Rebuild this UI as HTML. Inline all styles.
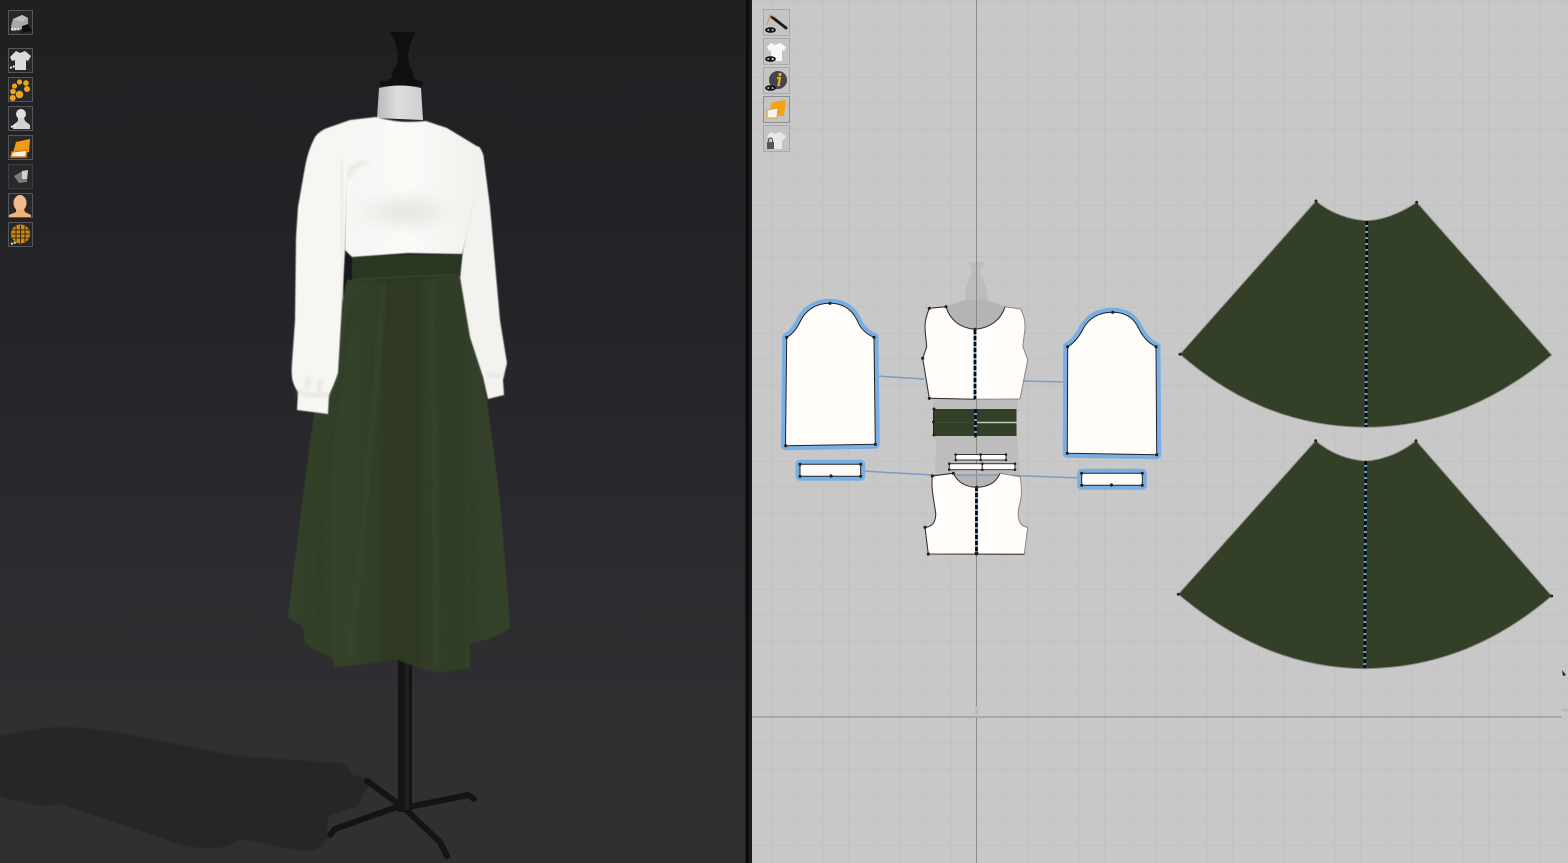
<!DOCTYPE html>
<html><head><meta charset="utf-8"><title>Garment 3D and 2D pattern view</title>
<style>html,body{margin:0;padding:0;background:#222;overflow:hidden}svg{display:block}</style></head>
<body>
<svg xmlns="http://www.w3.org/2000/svg" width="1568" height="863" viewBox="0 0 1568 863">
<defs>
<linearGradient id="bg" x1="0" y1="0" x2="0" y2="1">
<stop offset="0" stop-color="#1f2022"/><stop offset=".3" stop-color="#222326"/><stop offset=".6" stop-color="#2a2a2e"/><stop offset=".85" stop-color="#303033"/><stop offset="1" stop-color="#303032"/></linearGradient>
<pattern id="grid" x="976.5" y="717" width="25.6" height="25.6" patternUnits="userSpaceOnUse">
<path d="M0 0V25.6M0 0H25.6" stroke="#bcbcbc" stroke-width="1" fill="none"/></pattern>
<linearGradient id="neck" x1="0" x2="1"><stop offset="0" stop-color="#b9babd"/><stop offset=".45" stop-color="#dddddf"/><stop offset="1" stop-color="#cfcfd1"/></linearGradient>
<linearGradient id="blouse" x1="0" x2="1"><stop offset="0" stop-color="#f6f5f2"/><stop offset=".5" stop-color="#fafaf8"/><stop offset="1" stop-color="#f1f0ed"/></linearGradient>
<linearGradient id="skirt" gradientUnits="userSpaceOnUse" x1="288" y1="0" x2="512" y2="0">
<stop offset="0" stop-color="#35432b"/><stop offset=".12" stop-color="#323f28"/><stop offset=".25" stop-color="#35432b"/><stop offset=".38" stop-color="#323e28"/><stop offset=".47" stop-color="#2d3723"/><stop offset=".57" stop-color="#2e3924"/><stop offset=".65" stop-color="#323f28"/><stop offset=".72" stop-color="#303c27"/><stop offset=".85" stop-color="#34412a"/><stop offset="1" stop-color="#35432c"/></linearGradient>
<radialGradient id="bust" cx=".5" cy=".5" r=".5"><stop offset="0" stop-color="#d6d6d3" stop-opacity=".7"/><stop offset="1" stop-color="#dededb" stop-opacity="0"/></radialGradient>
<filter id="s1"><feGaussianBlur stdDeviation=".5"/></filter>
<filter id="s0"><feGaussianBlur stdDeviation=".35"/></filter>
<filter id="s2"><feGaussianBlur stdDeviation="2"/></filter>
<filter id="s3"><feGaussianBlur stdDeviation="5"/></filter>
<clipPath id="skclip"><path d="M347 280 460 276 475 340 487 400 500 500 508 600 510 627Q500 638 470 643L470 668Q450 672 437 672 415 668 398 660 365 664 335 667L332 657Q315 652 305 643L303 627 288 617 300 520 313 420 325 360 340 310Z"/></clipPath>
</defs>

<!-- left viewport -->
<rect width="745" height="863" fill="url(#bg)"/>
<!-- floor shadow -->
<path filter="url(#s1)" fill="#262628" d="M0 736Q30 728 64 727 100 728 135 736L236 756 340 763Q350 766 352 775L372 779 358 806 328 816 327 838Q322 852 300 851L240 839Q225 850 205 848 190 848 179 844L61 804 41 806 0 797Z"/>
<!-- stand -->
<g fill="#141415" stroke="#141415" stroke-linejoin="round" stroke-linecap="round">
<rect x="398" y="660" width="14" height="152" stroke="none"/>
<path d="M367 781 404 808 440 842 447 856" fill="none" stroke-width="6"/>
<path d="M330 835 335 829 400 806" fill="none" stroke-width="6"/>
<path d="M404 808 468 795 474 799" fill="none" stroke-width="6"/>
</g>
<rect x="405" y="662" width="4" height="148" fill="#1f1f20"/>
<!-- top of stand -->
<path fill="#0f0f10" d="M390 32H416Q410 42 408 54 408 64 411 68 414 72 413 78L422 83H381L392 78Q391 72 395 68 398 64 398 54 396 42 390 32Z"/>
<rect x="380" y="81" width="43" height="5" rx="2" fill="#101011"/>
<path fill="url(#neck)" filter="url(#s0)" d="M379 88Q400 83 421 88L423 120 377 118Z"/>
<!-- dark gap behind arm -->
<path fill="#17181a" d="M344 250 353 258 352 290 340 312 342 262Z"/>
<!-- skirt -->
<path fill="url(#skirt)" filter="url(#s1)" d="M347 280 460 276 475 340 487 400 500 500 508 600 510 627Q500 638 470 643L470 668Q450 672 437 672 415 668 398 660 365 664 335 667L332 657Q315 652 305 643L303 627 288 617 300 520 313 420 325 360 340 310Z"/>
<g clip-path="url(#skclip)" fill="none" stroke-width="3" filter="url(#s2)">
<path d="M384 285 372 430 350 660" stroke="#38462d"/>
<path d="M430 285 435 450 437 670" stroke="#37452c"/>
<path d="M352 300 322 500 318 640" stroke="#2f3b26"/>
<path d="M452 290 470 500 472 640" stroke="#2f3c27"/>
</g>
<!-- right sleeve -->
<path fill="#f3f2ef" filter="url(#s1)" d="M478 146Q484 152 484 160L490 207 500 320 507 363 503 380 504 395 488 399 483 377 470 337 460 277 463 250 474 200Z"/>
<path d="M487 372Q494 381 503 374" stroke="#dcdcd8" stroke-width="2" fill="none" filter="url(#s2)"/>
<!-- waistband -->
<path fill="#2c3722" filter="url(#s1)" d="M352 257 408 255 461 255 460 276 405 280 352 281Z"/>
<path d="M352 280Q405 276 460 275" stroke="#36432b" stroke-width="2" fill="none" filter="url(#s1)"/>
<!-- blouse torso -->
<path fill="url(#blouse)" filter="url(#s1)" d="M376 117Q400 124 426 121L447 128 480 148 484 165 475 200 468 232 462 254 408 253 352 257 345 250 346 180 330 127 350 120Z"/>
<ellipse cx="405" cy="212" rx="58" ry="22" fill="url(#bust)" filter="url(#s3)"/>
<path d="M347 178Q352 164 368 162" stroke="#e4e4e1" stroke-width="4" fill="none" filter="url(#s2)"/>
<!-- left sleeve -->
<path fill="#f7f6f3" filter="url(#s1)" d="M330 127Q320 130 315 137 308 150 305 167L298 207 296 237 295 320 292 363Q291 376 293 382 295 388 298 392L297 410 328 414 329 395Q334 385 338 373L343 287 345 250 347 180Q344 150 336 130Z"/>
<path d="M341 160 343 200 342 300" stroke="#e6e6e3" stroke-width="3" fill="none" filter="url(#s2)"/>
<path d="M298 392Q312 398 329 394M309 376 307 390M321 378 319 392" stroke="#dadad7" stroke-width="2.500" fill="none" filter="url(#s2)"/>

<!-- left toolbar -->
<g fill="#28282a" stroke="#565658">
<rect x="8.5" y="10.5" width="24" height="24"/><rect x="8.5" y="48.5" width="24" height="24"/>
<rect x="8.5" y="77.5" width="24" height="24"/><rect x="8.5" y="106.5" width="24" height="24"/>
<rect x="8.5" y="135.5" width="24" height="24"/><rect x="8.5" y="164.5" width="24" height="24" stroke="#3e3e40"/>
<rect x="8.5" y="193.5" width="24" height="24"/><rect x="8.5" y="222.5" width="24" height="24"/>
</g>
<g filter="url(#s0)">
<path d="M13 19 22 15 28 18 28 25 20 30 12 31 11 26Z" fill="#a8a8a8"/><path d="M13 19 22 22 28 18 22 15Z" fill="#bdbdbd"/><path d="M22 26 28 24 32 31 22 33Z" fill="#111"/><path d="M11 29h8" stroke="#ddd" stroke-width="2" stroke-dasharray="2 1"/>
<path d="M16 51 20 53 25 51 31 56 28 61 26 60 26 70 15 70 15 60 12 61 10 57Z" fill="#dcdcdc"/><path d="M10 68 15 66" stroke="#eee" stroke-width="2" stroke-dasharray="2 1"/>
<g fill="#eda41c"><circle cx="12.700" cy="98" r="3"/><circle cx="13" cy="91.500" r="2.800"/><circle cx="14.500" cy="86" r="2.600"/><circle cx="19.500" cy="82" r="2.600"/><circle cx="26" cy="83" r="2.800"/><circle cx="27" cy="89" r="3"/><circle cx="19.500" cy="94.500" r="3.800"/></g>
<circle cx="21" cy="114" r="5" fill="#dedede"/><path d="M18 118h6l1 3 5 4v4H13v-4l5-4Z" fill="#d2d2d2"/><path d="M11 127l6-2" stroke="#eee" stroke-width="2" stroke-dasharray="2 1"/>
<path d="M16 142 30 139 29 152 13 153Z" fill="#f09a12"/><path d="M12 152 27 150 26 157 11 157Z" fill="#f0f0ea" stroke="#d97e08" stroke-width="1.500"/>
<path d="M14 176 21 172 28 170 27 182 19 183Z" fill="#7a7a7a"/><path d="M22 171 28 170 27 179 22 179Z" fill="#cfcfcf"/>
<ellipse cx="20" cy="203" rx="6.500" ry="8" fill="#f5ba8b"/><path d="M16 209h8l1 3 6 3v2H9v-2l7-3Z" fill="#f2b27f"/>
<circle cx="20.500" cy="234" r="9.500" fill="#d08a12"/><path d="M12 230h17M11.500 234h18M12 238h17M16 226v16M20.500 225v18M25 226v16" stroke="#3b2c10" stroke-width="1" fill="none"/><path d="M11 244l6-2" stroke="#ddd" stroke-width="2" stroke-dasharray="2 1"/>
</g>

<!-- divider -->
<rect x="745" width="7" height="863" fill="#1b1b1c"/><rect x="746" width="3" height="863" fill="#0c0c0c"/>

<!-- right 2D panel -->
<rect x="752" width="816" height="863" fill="#c8c8c8"/>
<rect x="752" width="816" height="863" fill="url(#grid)"/>
<!-- avatar silhouette -->
<path fill="#bcbcbc" d="M969 262H984L980 272 984 282 987 290 988 300 1005 307 1000 320 950 320 946 307 965 300 966 288 972 272Z"/>
<path fill="#bdbdbd" d="M933 399H1018V409H1017V436L1020 476H1000L978 488 953 474 935 476 936 440 933 436Z"/>
<path fill="#b4b4b4" d="M946 307Q975 292 1005 307 1000 328 975 329 951 328 946 307Z"/>
<path fill="#b4b4b4" d="M953 474H1000Q994 488 977 488 959 488 953 474Z"/>
<!-- axes -->
<path d="M976.500 0V863M752 717H1562" stroke="#8a8a8a" stroke-width="1"/>
<!-- connectors -->
<path d="M876 376 924 379M1023 381 1066 382M862 471 933 475 1000 475 1081 478" stroke="#7f9cbf" stroke-width="1.500" fill="none"/>

<!-- sleeves -->
<g stroke-linejoin="round">
<path d="M785.500 445.700 786.700 337.300C793 334 797 328 801 320 806 310 816 303.300 830 303.300 844 303.300 852 310 857 320 860 328 866 334 874 337.300L875.300 444.300Z" fill="#78aee3" stroke="#78aee3" stroke-width="9"/>
<path d="M785.500 445.700 786.700 337.300C793 334 797 328 801 320 806 310 816 303.300 830 303.300 844 303.300 852 310 857 320 860 328 866 334 874 337.300L875.300 444.300Z" fill="#fffcf9" stroke="#222" stroke-width="1"/>
<path d="M1067.300 453.300 1067.700 346.700C1074 343 1079 337 1083 329 1089 318 1099 312.300 1112.700 312.300 1126 312.300 1134 318 1139 329 1143 337 1148 343 1156 346.700L1156.700 454.700Z" fill="#78aee3" stroke="#78aee3" stroke-width="9"/>
<path d="M1067.300 453.300 1067.700 346.700C1074 343 1079 337 1083 329 1089 318 1099 312.300 1112.700 312.300 1126 312.300 1134 318 1139 329 1143 337 1148 343 1156 346.700L1156.700 454.700Z" fill="#fffcf9" stroke="#222" stroke-width="1"/>
<!-- cuffs -->
<rect x="800" y="464.300" width="60.700" height="12" fill="#78aee3" stroke="#78aee3" stroke-width="9"/>
<rect x="800" y="464.300" width="60.700" height="12" fill="#fffcf9" stroke="#222"/>
<rect x="1081.700" y="473.300" width="60.600" height="12" fill="#78aee3" stroke="#78aee3" stroke-width="9"/>
<rect x="1081.700" y="473.300" width="60.600" height="12" fill="#fffcf9" stroke="#222"/>
<!-- bodices -->
<path fill="#fffcf9" stroke="#888" stroke-width="1" d="M929.300 308.300 946 306.700C950 320 960 328 975 329.300 990 328 1001 320 1005 306.700L1020.700 309C1024 316 1025 320 1025 326 1025 334 1023 340 1023 346.700L1027.700 360 1020 399 975 399.300 929.300 398.300 922.700 358.300 926.700 346.700C926 338 925 332 925 326 925 320 927 314 929.300 308.300Z"/>
<path d="M1005 306.700C1001 320 990 328 975 329.300 960 328 950 320 946 306.700L929.300 308.300C927 314 925 320 925 326 925 332 926 338 926.700 346.700L922.700 358.300 929.300 398.300 975 399.300" fill="none" stroke="#333" stroke-width="1"/>
<path fill="#fffcf9" stroke="#888" stroke-width="1" d="M932.300 476 953.300 473.300C958 483 966 487 976.700 487.300 988 487 996 483 1000 473.300L1020 476.700C1022 486 1022 497 1019 507 1017 516 1018 526 1027.700 527.300L1024.300 554.300 928.300 554 925 527.300C932 527 936 522 935.700 513.300 934 500 931 490 932.300 476Z"/>
<path d="M1000 473.300C996 483 988 487 976.700 487.300 966 487 958 483 953.300 473.300L932.300 476C931 490 934 500 935.700 513.300 936 522 932 527 925 527.300L928.300 554 1024.300 554.300" fill="none" stroke="#333" stroke-width="1"/>
</g>
<!-- waistband pieces -->
<rect x="933.500" y="409" width="42" height="27" fill="#333f26"/>
<rect x="975.500" y="409" width="41" height="27" fill="#333f26"/>
<path d="M976 422.500H1017" stroke="#c6c8c2" stroke-width="1.500"/>
<path d="M933 422.500H976" stroke="#3f4a34" stroke-width="1"/>
<path d="M933.500 409V436" stroke="#222" stroke-width="1"/>
<!-- small strips -->
<g fill="#fffcf9" stroke="#333" stroke-width="1">
<rect x="955.700" y="454.500" width="25" height="5.500"/><rect x="980.700" y="454.500" width="25.300" height="5.500"/>
<rect x="949.300" y="463.700" width="33" height="6"/><rect x="982.300" y="463.700" width="32.700" height="6"/>
</g>
<!-- skirts -->
<path fill="#333f26" stroke="#8c8f88" stroke-width="1" d="M1316 201C1330 213 1350 220 1366.700 220.700 1385 220 1402 212 1416.700 202.300L1551.700 355C1500 398 1440 427 1366 427.300 1290 427 1230 398 1180 354.300Z"/>
<path fill="#333f26" stroke="#8c8f88" stroke-width="1" d="M1315.700 440.700C1330 453 1348 460 1365.700 461 1384 460 1402 452 1416 440.700L1551.700 596C1500 640 1440 668 1364.700 668.700 1290 668 1230 638 1178.300 594.300Z"/>
<!-- dashed centre lines -->
<g fill="none" stroke-width="2.800">
<path d="M975 330V399" stroke="#63a4d8"/><path d="M975 330V399" stroke="#0a0a0a" stroke-dasharray="4 2"/>
<path d="M975.500 409V436" stroke="#63a4d8"/><path d="M975.500 409V436" stroke="#0a0a0a" stroke-dasharray="4 2"/>
<path d="M976.500 487V554" stroke="#63a4d8"/><path d="M976.500 487V554" stroke="#0a0a0a" stroke-dasharray="4 2"/>
<path d="M1366.700 221 1366 427" stroke="#63a4d8"/><path d="M1366.700 221 1366 427" stroke="#0a0a0a" stroke-dasharray="4 2"/>
<path d="M1365.700 461 1364.700 668" stroke="#63a4d8"/><path d="M1365.700 461 1364.700 668" stroke="#0a0a0a" stroke-dasharray="4 2"/>
</g>
<!-- points -->
<g fill="#222">
<circle cx="786.700" cy="337.300" r="1.600"/><circle cx="830" cy="303.300" r="1.600"/><circle cx="874" cy="337.300" r="1.600"/><circle cx="875.300" cy="444.300" r="1.600"/><circle cx="785.700" cy="445.700" r="1.600"/>
<circle cx="1067.700" cy="346.700" r="1.600"/><circle cx="1112.700" cy="312.300" r="1.600"/><circle cx="1156" cy="346.700" r="1.600"/><circle cx="1156.700" cy="454.700" r="1.600"/><circle cx="1067.300" cy="453.300" r="1.600"/>
<circle cx="800" cy="464.300" r="1.600"/><circle cx="860.700" cy="464.300" r="1.600"/><circle cx="800" cy="476.300" r="1.600"/><circle cx="831" cy="476" r="1.600"/><circle cx="860.700" cy="476.300" r="1.600"/>
<circle cx="1081.700" cy="473.300" r="1.600"/><circle cx="1142.300" cy="473.300" r="1.600"/><circle cx="1081.700" cy="485.300" r="1.600"/><circle cx="1111.500" cy="485" r="1.600"/><circle cx="1142.300" cy="485.300" r="1.600"/>
<circle cx="929.300" cy="308.300" r="1.600"/><circle cx="946" cy="306.700" r="1.600"/><circle cx="975" cy="329.300" r="1.600"/><circle cx="922.700" cy="358.300" r="1.600"/><circle cx="929.300" cy="398.300" r="1.600"/>
<circle cx="932.300" cy="476" r="1.600"/><circle cx="953.300" cy="473.300" r="1.600"/><circle cx="976.700" cy="487.300" r="1.600"/><circle cx="925" cy="527.300" r="1.600"/><circle cx="928.300" cy="554" r="1.600"/><circle cx="976.500" cy="553.500" r="2"/>
<circle cx="934" cy="409" r="1.500"/><circle cx="933.500" cy="422" r="1.500"/><circle cx="934" cy="435" r="1.500"/><circle cx="975.500" cy="436" r="1.500"/>
<circle cx="955.700" cy="454.500" r="1.300"/><circle cx="955.700" cy="460" r="1.300"/><circle cx="980.700" cy="454.500" r="1.300"/><circle cx="980.700" cy="460" r="1.300"/><circle cx="1006" cy="454.500" r="1.300"/><circle cx="1006" cy="460" r="1.300"/>
<circle cx="949.300" cy="463.700" r="1.300"/><circle cx="949.300" cy="469.700" r="1.300"/><circle cx="982.300" cy="463.700" r="1.300"/><circle cx="982.300" cy="469.700" r="1.300"/><circle cx="1015" cy="463.700" r="1.300"/><circle cx="1015" cy="469.700" r="1.300"/>
<circle cx="1316" cy="201" r="1.500"/><circle cx="1416.700" cy="202.300" r="1.500"/><circle cx="1180" cy="354.300" r="1.500"/>
<circle cx="1315.700" cy="440.700" r="1.500"/><circle cx="1416" cy="440.700" r="1.500"/><circle cx="1178.300" cy="594.300" r="1.500"/><circle cx="1551.700" cy="596" r="1.500"/>
</g>
<!-- right toolbar -->
<g fill="#c4c4c4" stroke="#a8a8a8">
<rect x="763.500" y="9.500" width="26" height="26"/><rect x="763.500" y="38.500" width="26" height="26"/><rect x="763.500" y="67.500" width="26" height="26"/><rect x="763.500" y="96.500" width="26" height="26" stroke="#8e8e8e"/><rect x="763.500" y="125.500" width="26" height="26"/>
</g>
<g filter="url(#s0)">
<path d="M772 17 786 28" stroke="#1a1a1c" stroke-width="3" stroke-linecap="round"/><path d="M770 15 767 25M770 15 775 17" stroke="#d79a3a" stroke-width="1" fill="none"/>
<path d="M771 43 775 45 780 43 786 47 784 51 782 50 782 61 771 61 771 50 769 51 767 47Z" fill="#f8f8f8"/>
<circle cx="778" cy="80" r="9" fill="#45454d"/><path d="M777 78h3l-1.500 7h1.500" stroke="#f0a81c" stroke-width="2.200" fill="none"/><circle cx="780" cy="74.500" r="1.600" fill="#f0a81c"/>
<g fill="none" stroke="#111" stroke-width="1.600"><ellipse cx="770.500" cy="30" rx="4.500" ry="2"/><ellipse cx="770.500" cy="59" rx="4.500" ry="2"/><ellipse cx="770.500" cy="88" rx="4.500" ry="2"/></g>
<g fill="#111"><circle cx="770.500" cy="30" r="1.400"/><circle cx="770.500" cy="59" r="1.400"/><circle cx="770.500" cy="88" r="1.400"/></g>
<path d="M772 102 786 100 784 116 768 116Z" fill="#f5a316"/><path d="M767 110 778 108 777 118 767 118Z" fill="#f6f2e8" stroke="#e09a33"/>
<path d="M771 132 775 134 780 132 786 136 784 140 782 139 782 149 771 149 771 139 769 140 767 136Z" fill="#e8e8e8"/>
<rect x="767" y="142" width="7" height="7" fill="#555"/><path d="M768.500 142v-2a2 2 0 0 1 4 0v2" fill="none" stroke="#555" stroke-width="1.200"/>
</g>
<!-- misc marks -->
<path d="M1562 670 1566 675 1563 676Z" fill="#222"/>
<path d="M1562 710H1568" stroke="#a8a8a8"/>
<rect x="975" y="706" width="3" height="11" fill="#bdbdbd"/>
</svg>
</body></html>
